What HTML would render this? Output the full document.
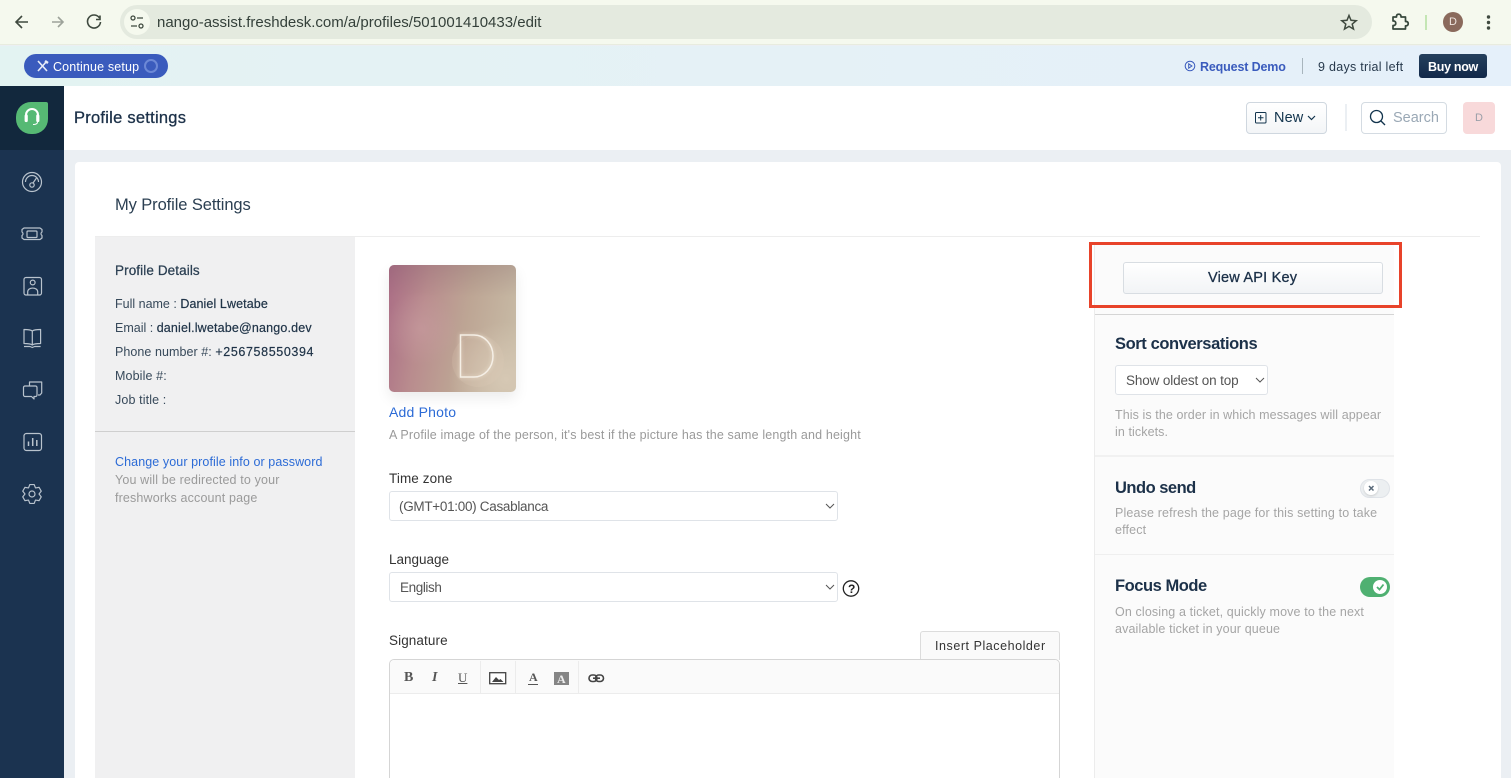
<!DOCTYPE html>
<html><head><meta charset="utf-8"><title>Profile settings</title>
<style>
*{box-sizing:border-box}
html,body{margin:0;padding:0;width:1511px;height:778px;overflow:hidden}
body{position:relative;background:#ebeff3;font-family:"Liberation Sans",sans-serif;color:#12344d}
#w{position:absolute;left:0;top:0;width:1511px;height:778px;overflow:hidden}
.a{position:absolute}
.t{position:absolute;white-space:nowrap;line-height:1}
svg{position:absolute;overflow:visible}
.sel{position:absolute;background:#fff;border:1px solid #dfe3e8;border-radius:3px}
.g{color:#9a9a9a}
</style></head><body><div id="w">
<!-- browser chrome -->
<div class="a" style="left:0;top:0;width:1511px;height:45px;background:#f5f9ee;border-bottom:1px solid #e8ecdf"></div>
<div class="a" style="left:120px;top:5px;width:1252px;height:34px;border-radius:17px;background:#e4eadf"></div>
<div class="a" style="left:124px;top:9px;width:26px;height:26px;border-radius:13px;background:#f5f9ee"></div>
<svg style="left:0;top:0" width="1511" height="45" fill="none" stroke="#3f4a3f" stroke-width="1.6">
<path d="M28 22H16M22 16l-6 6 6 6"/>
<path d="M52 22h11M58 17l5 5-5 5" stroke="#9da39a"/>
<path d="M99.500 18a6.500 6.500 0 1 0 1 4M100 15.500v4h-4"/>
<circle cx="133" cy="18" r="2" stroke-width="1.300"/><path d="M137 18h6M131 26h6" stroke-width="1.300"/><circle cx="141" cy="26" r="2" stroke-width="1.300"/>
<path d="M1349 15.500l2 4.800 5.200.4-4 3.400 1.300 5-4.500-2.700-4.500 2.700 1.300-5-4-3.400 5.200-.4z" stroke-width="1.500"/>
<path d="M1393 17h3.500v-1a2.300 2.300 0 0 1 4.500 0v1h4.500v4.500h1a2.200 2.200 0 0 1 0 4.300h-1V29h-12.500v-3.500h1.200a2.400 2.400 0 0 0 0-4.500h-1.200z" stroke-width="1.700" stroke-linejoin="round" stroke="#36483c"/>
<path d="M1426 15v15" stroke="#c4e6b4" stroke-width="2"/>
<g fill="#3f4a3f" stroke="none"><circle cx="1488.500" cy="17" r="1.700"/><circle cx="1488.500" cy="22.500" r="1.700"/><circle cx="1488.500" cy="28" r="1.700"/></g>
</svg>
<div class="t" style="left:157px;top:14.500px;font-size:15px;color:#34403a">nango-assist.freshdesk.com/a/profiles/501001410433/edit</div>
<div class="a" style="left:1443px;top:12px;width:20px;height:20px;border-radius:10px;background:#8a6a5c"></div>
<div class="t" style="left:1449px;top:17px;font-size:11px;color:#f0e6e0">D</div>
<!-- banner -->
<div class="a" style="left:0;top:46px;width:1511px;height:40px;background:linear-gradient(90deg,#e3f3f2,#e5f1f6 50%,#e5f0fa)"></div>
<div class="a" style="left:24px;top:54px;width:144px;height:24px;border-radius:12px;background:#3a5bbd"></div>
<svg style="left:36px;top:60px" width="14" height="12" fill="none" stroke="#e8edf8" stroke-width="1.600"><path d="M2 1l9 10M11 1L2 11"/><path d="M9 1l3 2" stroke-width="2.400"/></svg>
<div class="t" style="left:53px;top:60.500px;font-size:12.500px;color:#fff;letter-spacing:.15px">Continue setup</div>
<div class="a" style="left:144px;top:59px;width:14px;height:14px;border-radius:7px;border:2.500px solid #6c88d6"></div>
<svg style="left:1184px;top:60px" width="12" height="12" fill="none" stroke="#3a5bbd" stroke-width="1"><circle cx="6" cy="6" r="4.800"/><path d="M4.700 3.800l3.200 2.200-3.200 2.200z"/></svg>
<div class="t" style="left:1200px;top:60.500px;font-size:12.500px;font-weight:700;color:#3a5bbd;letter-spacing:-.15px">Request Demo</div>
<div class="a" style="left:1302px;top:58px;width:1px;height:16px;background:#a8b5bd"></div>
<div class="t" style="left:1318px;top:60.500px;font-size:12.500px;color:#27394c;letter-spacing:.28px">9 days trial left</div>
<div class="a" style="left:1419px;top:54px;width:68px;height:24px;border-radius:3px;background:linear-gradient(#25405d,#12294a)"></div>
<div class="t" style="left:1428px;top:60.500px;font-size:12.500px;font-weight:700;color:#fff;letter-spacing:-.3px">Buy now</div>
<!-- sidebar -->
<div class="a" style="left:0;top:86px;width:64px;height:692px;background:#1b3350"></div>
<div class="a" style="left:0;top:86px;width:64px;height:64px;background:#12283d"></div>
<div class="a" style="left:16px;top:102px;width:32px;height:32px;background:#56b974;border-radius:15px 2px 15px 15px"></div>
<svg style="left:0;top:86px" width="64" height="64" fill="none" stroke="#fff" stroke-width="2"><path d="M26 32v-3a6 6 0 0 1 12 0v3"/><path d="M26.200 30v4.500M37.800 30v4.500" stroke-width="3.200" stroke-linecap="round"/><path d="M37.500 36q0 2.500-4.500 2.500" stroke-width="1"/></svg>
<svg style="left:0;top:150px" width="64" height="370" fill="none" stroke="#b9c3cd" stroke-width="1.200" stroke-linejoin="round">
<circle cx="32" cy="32" r="9.500"/><path d="M25.500 32a6.500 6.500 0 0 1 13 0"/><circle cx="32" cy="35" r="2.200"/><path d="M33 33l3.500-5"/>
<path d="M24 78.500h16l2 1.500v2.500a2 2 0 0 0 0 3.500v2.500l-2 1.500H24l-2-1.500V86a2 2 0 0 0 0-3.500V80z" transform="translate(0,-.5)"/><rect x="27" y="81" width="10" height="6.500" rx="1"/>
<rect x="24" y="127.500" width="17.500" height="17.500" rx="2"/><circle cx="32.700" cy="132.500" r="2.400"/><path d="M27.700 144.800v-3c0-5 10-5 10 0v3"/>
<path d="M32.300 181c-2-1.500-5-1.500-8.300-1.500v14c3.300 0 6.300 0 8.300 1.500 2-1.500 5-1.500 8.300-1.500v-14c-3.300 0-6.300 0-8.300 1.500zM32.300 181v14M24 196.500h6l2.300 1 2.300-1h6"/>
<path d="M29.500 235.500v-3.500h12.200v11l-1.700 2h-2"/><path d="M25 236h10.500a1.500 1.500 0 0 1 1.500 1.500v7.500a1.500 1.500 0 0 1-1.500 1.500H34v2.500l-2.500-2.500H25a1.500 1.500 0 0 1-1.500-1.500v-7.500A1.500 1.500 0 0 1 25 236z"/>
<rect x="24" y="283.500" width="17.500" height="17" rx="2.500"/><path d="M28.500 296v-4.500M32.700 296v-8M36.800 296v-6" stroke-width="1.500"/>
<path d="M29.820 334.550L34.180 334.550L35.500 337.940L39.090 337.380L41.270 341.160L39 344L41.270 346.840L39.090 350.620L35.500 350.060L34.180 353.450L29.820 353.450L28.500 350.060L24.910 350.620L22.730 346.840L25 344L22.730 341.160L24.910 337.380L28.500 337.940Z"/><circle cx="32" cy="344" r="3"/>
</svg>
<!-- app header -->
<div class="a" style="left:64px;top:86px;width:1447px;height:64px;background:#fff"></div>
<div class="t" style="left:74px;top:109.500px;font-size:16.500px;color:#1c3149;letter-spacing:.25px;-webkit-text-stroke:.3px #1c3149">Profile settings</div>
<div class="a" style="left:1246px;top:102px;width:81px;height:32px;border:1px solid #cfd7df;border-radius:4px;background:linear-gradient(#fff,#f3f5f7)"></div>
<svg style="left:1255px;top:112px" width="12" height="12" fill="none" stroke="#12344d" stroke-width="1"><rect x=".5" y=".5" width="10.500" height="10.500" rx="1"/><path d="M5.700 3v5.500M3 5.700h5.500"/></svg>
<div class="t" style="left:1274px;top:111px;font-size:14.500px;color:#12344d;letter-spacing:.1px">New</div>
<svg style="left:1307px;top:115px" width="9" height="6" fill="none" stroke="#12344d" stroke-width="1.200"><path d="M1 1l3.500 3.500L8 1"/></svg>
<div class="a" style="left:1345px;top:104px;width:2px;height:27px;background:#ebeff3"></div>
<div class="a" style="left:1361px;top:102px;width:86px;height:32px;border:1px solid #d4dbe2;border-radius:4px;background:#fff"></div>
<svg style="left:1369px;top:109px" width="18" height="18" fill="none" stroke="#12344d" stroke-width="1.300"><circle cx="7.500" cy="7.500" r="6"/><path d="M12 12l4 4"/></svg>
<div class="t" style="left:1393px;top:111px;font-size:14.500px;color:#9aa8b5">Search</div>
<div class="a" style="left:1463px;top:102px;width:32px;height:32px;border-radius:4px;background:#f8d9da"></div>
<div class="t" style="left:1475px;top:113px;font-size:11px;color:#9a9fa8">D</div>
<!-- card -->
<div class="a" style="left:75px;top:162px;width:1426px;height:616px;background:#fff;border-radius:4px 4px 0 0"></div>
<div class="t" style="left:115px;top:197px;font-size:16.500px;color:#2b3f52;letter-spacing:-.1px">My Profile Settings</div>
<div class="a" style="left:95px;top:236px;width:1385px;height:1px;background:#ededed"></div>
<!-- left panel -->
<div class="a" style="left:95px;top:237px;width:260px;height:541px;background:#f0f0f1"></div>
<div class="a" style="left:95px;top:431px;width:260px;height:1px;background:#cfcfcf"></div>
<div class="t" style="left:115px;top:264px;font-size:13.500px;color:#2b3f52;-webkit-text-stroke:.25px #2b3f52;letter-spacing:.1px">Profile Details</div>
<div class="t" style="left:115px;top:298px;font-size:12.500px;color:#37495a">Full name : <span style="color:#1f3347;-webkit-text-stroke:.2px #1f3347;letter-spacing:.1px">Daniel Lwetabe</span></div>
<div class="t" style="left:115px;top:322px;font-size:12.500px;color:#37495a">Email : <span style="color:#1f3347;-webkit-text-stroke:.2px #1f3347;letter-spacing:.17px">daniel.lwetabe@nango.dev</span></div>
<div class="t" style="left:115px;top:346px;font-size:12.500px;color:#37495a;letter-spacing:.06px">Phone number #: <span style="color:#1f3347;-webkit-text-stroke:.2px #1f3347;letter-spacing:.62px">+256758550394</span></div>
<div class="t" style="left:115px;top:370px;font-size:12.500px;color:#37495a;letter-spacing:.12px">Mobile #:</div>
<div class="t" style="left:115px;top:394px;font-size:12.500px;color:#37495a;letter-spacing:.12px">Job title :</div>
<div class="t" style="left:115px;top:456px;font-size:12.500px;color:#2c6bd6;letter-spacing:.09px">Change your profile info or password</div>
<div class="t g" style="left:115px;top:474px;font-size:12.500px;letter-spacing:.15px">You will be redirected to your</div>
<div class="t g" style="left:115px;top:492px;font-size:12.500px;letter-spacing:.15px">freshworks account page</div>
<!-- avatar -->
<div class="a" style="left:389px;top:265px;width:127px;height:127px;border-radius:5px;overflow:hidden;box-shadow:0 6px 14px rgba(0,0,0,.08);background:radial-gradient(circle at 92% 90%,#d6c8b4 0,rgba(214,200,180,0) 35%),radial-gradient(circle at 25% 50%,rgba(205,160,165,.45) 0,rgba(205,160,165,0) 32%),linear-gradient(100deg,#aa6c85 0,#b98c8e 28%,#bda594 58%,#c9bea8 100%)">
<div class="a" style="left:0;top:0;width:127px;height:32px;background:linear-gradient(rgba(120,90,100,.22),rgba(120,90,100,0))"></div>
<div class="a" style="left:63px;top:70px;width:52px;height:52px;border-radius:26px;background:rgba(225,205,185,.2)"></div>
<svg style="left:0;top:0;filter:drop-shadow(0 0 2px rgba(255,245,230,.7))" width="127" height="127" fill="none"><path d="M71.500 70H85a19 21 0 0 1 0 42H71.500z" stroke="#f5efe6" stroke-width="1.500"/></svg>
</div>
<div class="t" style="left:389px;top:405px;font-size:14px;color:#2c6bd6;letter-spacing:.2px">Add Photo</div>
<div class="t g" style="left:389px;top:429px;font-size:12.500px;letter-spacing:.15px">A Profile image of the person, it's best if the picture has the same length and height</div>
<!-- time zone -->
<div class="t" style="left:389px;top:472px;font-size:13.500px;color:#333;letter-spacing:.1px">Time zone</div>
<div class="sel" style="left:389px;top:491px;width:449px;height:30px"></div>
<div class="t" style="left:399px;top:500px;font-size:13.500px;color:#555;letter-spacing:-.3px">(GMT+01:00) Casablanca</div>
<svg style="left:825px;top:503px" width="10" height="7" fill="none" stroke="#555" stroke-width="1"><path d="M1 1l4 4 4-4"/></svg>
<!-- language -->
<div class="t" style="left:389px;top:553px;font-size:13.500px;color:#333;letter-spacing:0">Language</div>
<div class="sel" style="left:389px;top:572px;width:449px;height:30px"></div>
<div class="t" style="left:400px;top:581px;font-size:13.500px;color:#555;letter-spacing:-.4px">English</div>
<svg style="left:825px;top:584px" width="10" height="7" fill="none" stroke="#555" stroke-width="1"><path d="M1 1l4 4 4-4"/></svg>
<svg style="left:842px;top:580px" width="18" height="18" fill="none" stroke="#222" stroke-width="1.300"><circle cx="9" cy="8.500" r="7.700"/></svg>
<div class="t" style="left:848px;top:583px;font-size:12px;font-weight:700;color:#222">?</div>
<!-- signature -->
<div class="t" style="left:389px;top:634px;font-size:13.500px;color:#333;letter-spacing:.1px">Signature</div>
<div class="a" style="left:920px;top:631px;width:140px;height:29px;background:#fafafa;border:1px solid #dcdcdc;border-bottom:none;border-radius:3px 3px 0 0"></div>
<div class="t" style="left:935px;top:640px;font-size:12.500px;color:#333;letter-spacing:.55px">Insert Placeholder</div>
<div class="a" style="left:389px;top:659px;width:671px;height:119px;background:#fff;border:1px solid #d5d5d5;border-bottom:none;border-radius:5px 5px 0 0"></div>
<div class="a" style="left:390px;top:660px;width:669px;height:34px;background:#fafafa;border-bottom:1px solid #ececec;border-radius:5px 5px 0 0"></div>
<div class="a" style="left:480px;top:661px;width:1px;height:33px;background:#ececec"></div>
<div class="a" style="left:515px;top:661px;width:1px;height:33px;background:#ececec"></div>
<div class="a" style="left:578px;top:661px;width:1px;height:33px;background:#ececec"></div>
<div class="t" style="left:404px;top:671px;font-family:'Liberation Serif',serif;font-size:14px;font-weight:700;color:#555">B</div>
<div class="t" style="left:432px;top:671px;font-family:'Liberation Serif',serif;font-size:14px;font-style:italic;font-weight:700;color:#555">I</div>
<div class="t" style="left:458px;top:671px;font-family:'Liberation Serif',serif;font-size:13px;color:#555;text-decoration:underline">U</div>
<svg style="left:489px;top:672px" width="18" height="13"><rect x=".7" y=".7" width="16" height="11" fill="#fff" stroke="#444" stroke-width="1.300"/><path d="M3 10l4-5 3 3 1.500-1 3 3z" fill="#444"/></svg>
<div class="t" style="left:528px;top:671px;font-family:'Liberation Serif',serif;font-size:12px;font-weight:700;color:#555;border-bottom:1.500px solid #555;padding:0 0 1px 1px">A</div>
<div class="a" style="left:554px;top:672px;width:15px;height:13px;background:#858585"></div>
<div class="t" style="left:557px;top:673px;font-family:'Liberation Serif',serif;font-size:12px;font-weight:700;color:#eee">A</div>
<svg style="left:588px;top:674px" width="18" height="10" fill="none" stroke="#444" stroke-width="1.600"><rect x="1" y="1" width="8" height="6.500" rx="3.200"/><rect x="7.500" y="1" width="8" height="6.500" rx="3.200"/><path d="M5 4.200h7"/></svg>
<!-- right panel -->
<div class="a" style="left:1094px;top:243px;width:300px;height:535px;background:#fbfbfb;border-left:1px solid #ececec"></div>
<div class="a" style="left:1095px;top:314px;width:299px;height:1px;background:#d5d5d5"></div>
<div class="a" style="left:1123px;top:262px;width:260px;height:32px;border:1px solid #d8dde2;border-radius:3px;background:linear-gradient(#fff,#f2f4f6)"></div>
<div class="t" style="left:1208px;top:271px;font-size:14.500px;color:#1c3149;-webkit-text-stroke:.3px #1c3149;letter-spacing:.2px">View API Key</div>
<div class="a" style="left:1089px;top:242px;width:313px;height:66px;border:3px solid #e8432a"></div>
<div class="t" style="left:1115px;top:336px;font-size:16.500px;font-weight:700;color:#1c3149;letter-spacing:-.4px">Sort conversations</div>
<div class="sel" style="left:1115px;top:365px;width:153px;height:30px"></div>
<div class="t" style="left:1126px;top:374px;font-size:13.500px;color:#555;letter-spacing:-.13px">Show oldest on top</div>
<svg style="left:1255px;top:377px" width="10" height="7" fill="none" stroke="#555" stroke-width="1"><path d="M1 1l4 4 4-4"/></svg>
<div class="t" style="left:1115px;top:409px;font-size:12.500px;color:#a5a5a5;letter-spacing:.09px">This is the order in which messages will appear</div>
<div class="t" style="left:1115px;top:426px;font-size:12.500px;color:#a5a5a5;letter-spacing:.09px">in tickets.</div>
<div class="a" style="left:1095px;top:455px;width:299px;height:2px;background:#f1f1f1"></div>
<div class="t" style="left:1115px;top:480px;font-size:16.500px;font-weight:700;color:#1c3149;letter-spacing:-.5px">Undo send</div>
<div class="a" style="left:1360px;top:479px;width:30px;height:19px;border-radius:10px;background:#eceff1;border:1px solid #dfe3e8"></div>
<div class="a" style="left:1364px;top:481px;width:14px;height:14px;border-radius:7px;background:#fff;box-shadow:0 1px 2px rgba(0,0,0,.15)"></div>
<svg style="left:1368px;top:485px" width="7" height="7" fill="none" stroke="#5a6a7a" stroke-width="1.500"><path d="M1 1l4.500 4.500M5.500 1L1 5.500"/></svg>
<div class="t" style="left:1115px;top:507px;font-size:12.500px;color:#a5a5a5;letter-spacing:.15px">Please refresh the page for this setting to take</div>
<div class="t" style="left:1115px;top:524px;font-size:12.500px;color:#a5a5a5;letter-spacing:.15px">effect</div>
<div class="a" style="left:1095px;top:554px;width:299px;height:1px;background:#efefef"></div>
<div class="t" style="left:1115px;top:578px;font-size:16.500px;font-weight:700;color:#1c3149;letter-spacing:-.45px">Focus Mode</div>
<div class="a" style="left:1360px;top:577px;width:30px;height:20px;border-radius:10px;background:#4fb071"></div>
<div class="a" style="left:1373px;top:580px;width:14px;height:14px;border-radius:7px;background:#fff"></div>
<svg style="left:1376px;top:583px" width="9" height="8" fill="none" stroke="#4fb071" stroke-width="1.800"><path d="M1 4l2.500 2.500L7.500 1.500"/></svg>
<div class="t" style="left:1115px;top:606px;font-size:12.500px;color:#a5a5a5;letter-spacing:.13px">On closing a ticket, quickly move to the next</div>
<div class="t" style="left:1115px;top:623px;font-size:12.500px;color:#a5a5a5;letter-spacing:.13px">available ticket in your queue</div>
</div></body></html>
